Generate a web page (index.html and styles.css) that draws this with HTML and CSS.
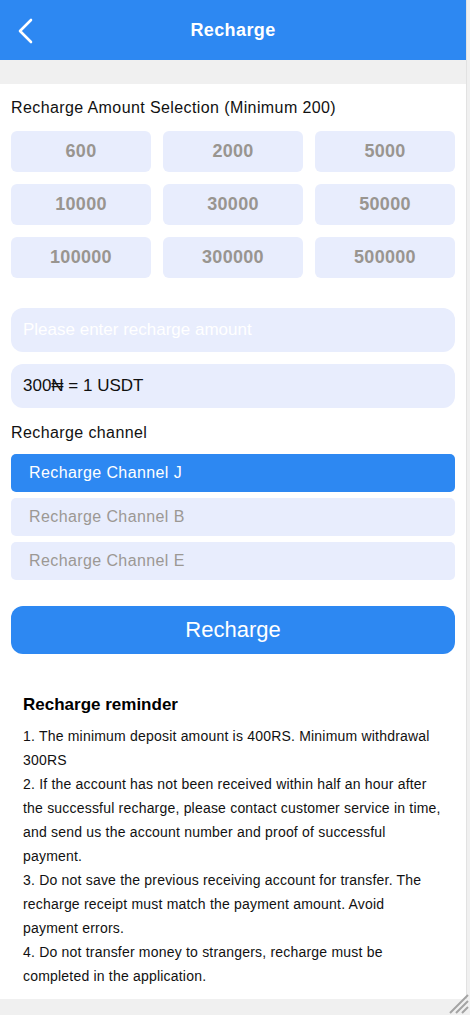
FILE: index.html
```html
<!DOCTYPE html>
<html lang="en">
<head>
  <meta charset="UTF-8">
  <meta name="viewport" content="width=device-width, initial-scale=1.0">
  <title>Recharge</title>
  <link rel="stylesheet" href="styles.css">
</head>
<body>
  <div id="page">
    <header class="top-bar flex going-center">
      <svg class="back" width="16" height="26" viewBox="0 0 16 26">
        <path d="M14 2 L3 13 L14 24" fill="none" stroke="#fff" stroke-width="2.6" stroke-linecap="round" stroke-linejoin="round"/>
      </svg>
      <h1>Recharge</h1>
    </header>
    <div class="spacer"></div>

    <main id="recharge-form">
      <p class="label">Recharge Amount Selection (Minimum 200)</p>
      <div class="amount-grid">
        <button class="amount">600</button>
        <button class="amount">2000</button>
        <button class="amount">5000</button>
        <button class="amount">10000</button>
        <button class="amount">30000</button>
        <button class="amount">50000</button>
        <button class="amount">100000</button>
        <button class="amount">300000</button>
        <button class="amount">500000</button>
      </div>

      <input type="number" id="input-amount" class="field" placeholder="Please enter recharge amount">
      <div class="field rate">300₦ = 1 USDT</div>

      <p class="label channel-label">Recharge channel</p>
      <div class="flex column channel-list">
        <div class="channel active">Recharge Channel J</div>
        <div class="channel">Recharge Channel B</div>
        <div class="channel">Recharge Channel E</div>
      </div>

      <button id="btn-recharge">Recharge</button>

      <section class="reminder">
        <h3>Recharge reminder</h3>
        <p>1. The minimum deposit amount is 400RS. Minimum withdrawal 300RS</p>
        <p>2. If the account has not been received within half an hour after the successful recharge, please contact customer service in time, and send us the account number and proof of successful payment.</p>
        <p>3. Do not save the previous receiving account for transfer. The recharge receipt must match the payment amount. Avoid payment errors.</p>
        <p>4. Do not transfer money to strangers, recharge must be completed in the application.</p>
      </section>
    </main>
  </div>

  <svg class="grip" width="22" height="22" viewBox="0 0 22 22">
    <path d="M21 3 L3 21 M21 9 L9 21 M21 15 L15 21" stroke="#a4a4a4" stroke-width="2"/>
  </svg>
</body>
</html>
```

FILE: styles.css
```css
html {
  background: #f0f0f0;
}
body {
  margin: 0;
  font-family: "Liberation Sans", Arial, sans-serif;
  min-height: 1015px;
  position: relative;
}
#page {
  width: 467px;
  height: 999px;
  background: #fff;
  border-right: 1px solid #e2e2e2;
  box-sizing: border-box;
  overflow: hidden;
}
.flex {
  display: flex;
}
.column {
  flex-flow: column nowrap;
}
.going-center {
  align-items: center;
  justify-content: center;
}
.top-bar {
  position: relative;
  height: 60px;
  background: #2d88f2;
}
.top-bar h1 {
  margin: 0;
  color: #fff;
  font-size: 18px;
  font-weight: bold;
  letter-spacing: .4px;
}
.back {
  position: absolute;
  left: 17px;
  top: 18px;
}
.spacer {
  height: 24px;
  background: #f0f0f0;
}
#recharge-form {
  padding: 0 11px;
}
.label {
  margin: 0;
  font-size: 16px;
  letter-spacing: .4px;
  color: #111;
}
#recharge-form > .label:first-child {
  padding-top: 15px;
  line-height: 18px;
}
.amount-grid {
  display: grid;
  grid-template-columns: repeat(3, 1fr);
  gap: 12px;
  margin-top: 14px;
}
.amount {
  height: 41px;
  border: none;
  border-radius: 6px;
  background: #e8edfd;
  color: #999590;
  font-family: inherit;
  font-size: 18px;
  font-weight: bold;
  letter-spacing: .3px;
}
.field {
  display: block;
  width: 100%;
  box-sizing: border-box;
  height: 44px;
  border: none;
  outline: none;
  border-radius: 12px;
  background: #e8edfd;
  padding: 0 12px;
  font-family: inherit;
  font-size: 17px;
  color: #111;
}
#input-amount {
  margin-top: 30px;
}
#input-amount::placeholder {
  color: #fff;
}
.rate {
  margin-top: 12px;
  line-height: 44px;
}
.channel-label {
  margin-top: 15px;
  line-height: 20px;
}
.channel-list {
  gap: 6px;
  margin-top: 11px;
}
.channel {
  height: 38px;
  line-height: 38px;
  padding-left: 18px;
  border-radius: 5px;
  background: #e8edfd;
  color: #9c9894;
  font-size: 16px;
  letter-spacing: .4px;
}
.channel.active {
  background: #2d88f2;
  color: #fff;
}
#btn-recharge {
  display: block;
  width: 100%;
  height: 48px;
  margin-top: 26px;
  border: none;
  border-radius: 12px;
  background: #2d88f2;
  color: #fff;
  font-family: inherit;
  font-size: 22px;
}
.reminder {
  padding: 40px 12px 0;
}
.reminder h3 {
  margin: 0 0 8px;
  font-size: 17px;
  line-height: 22px;
  color: #000;
}
.reminder p {
  margin: 0;
  font-size: 14px;
  line-height: 24px;
  letter-spacing: .2px;
  color: #111;
}
.grip {
  position: absolute;
  right: 1px;
  top: 992px;
}
```
